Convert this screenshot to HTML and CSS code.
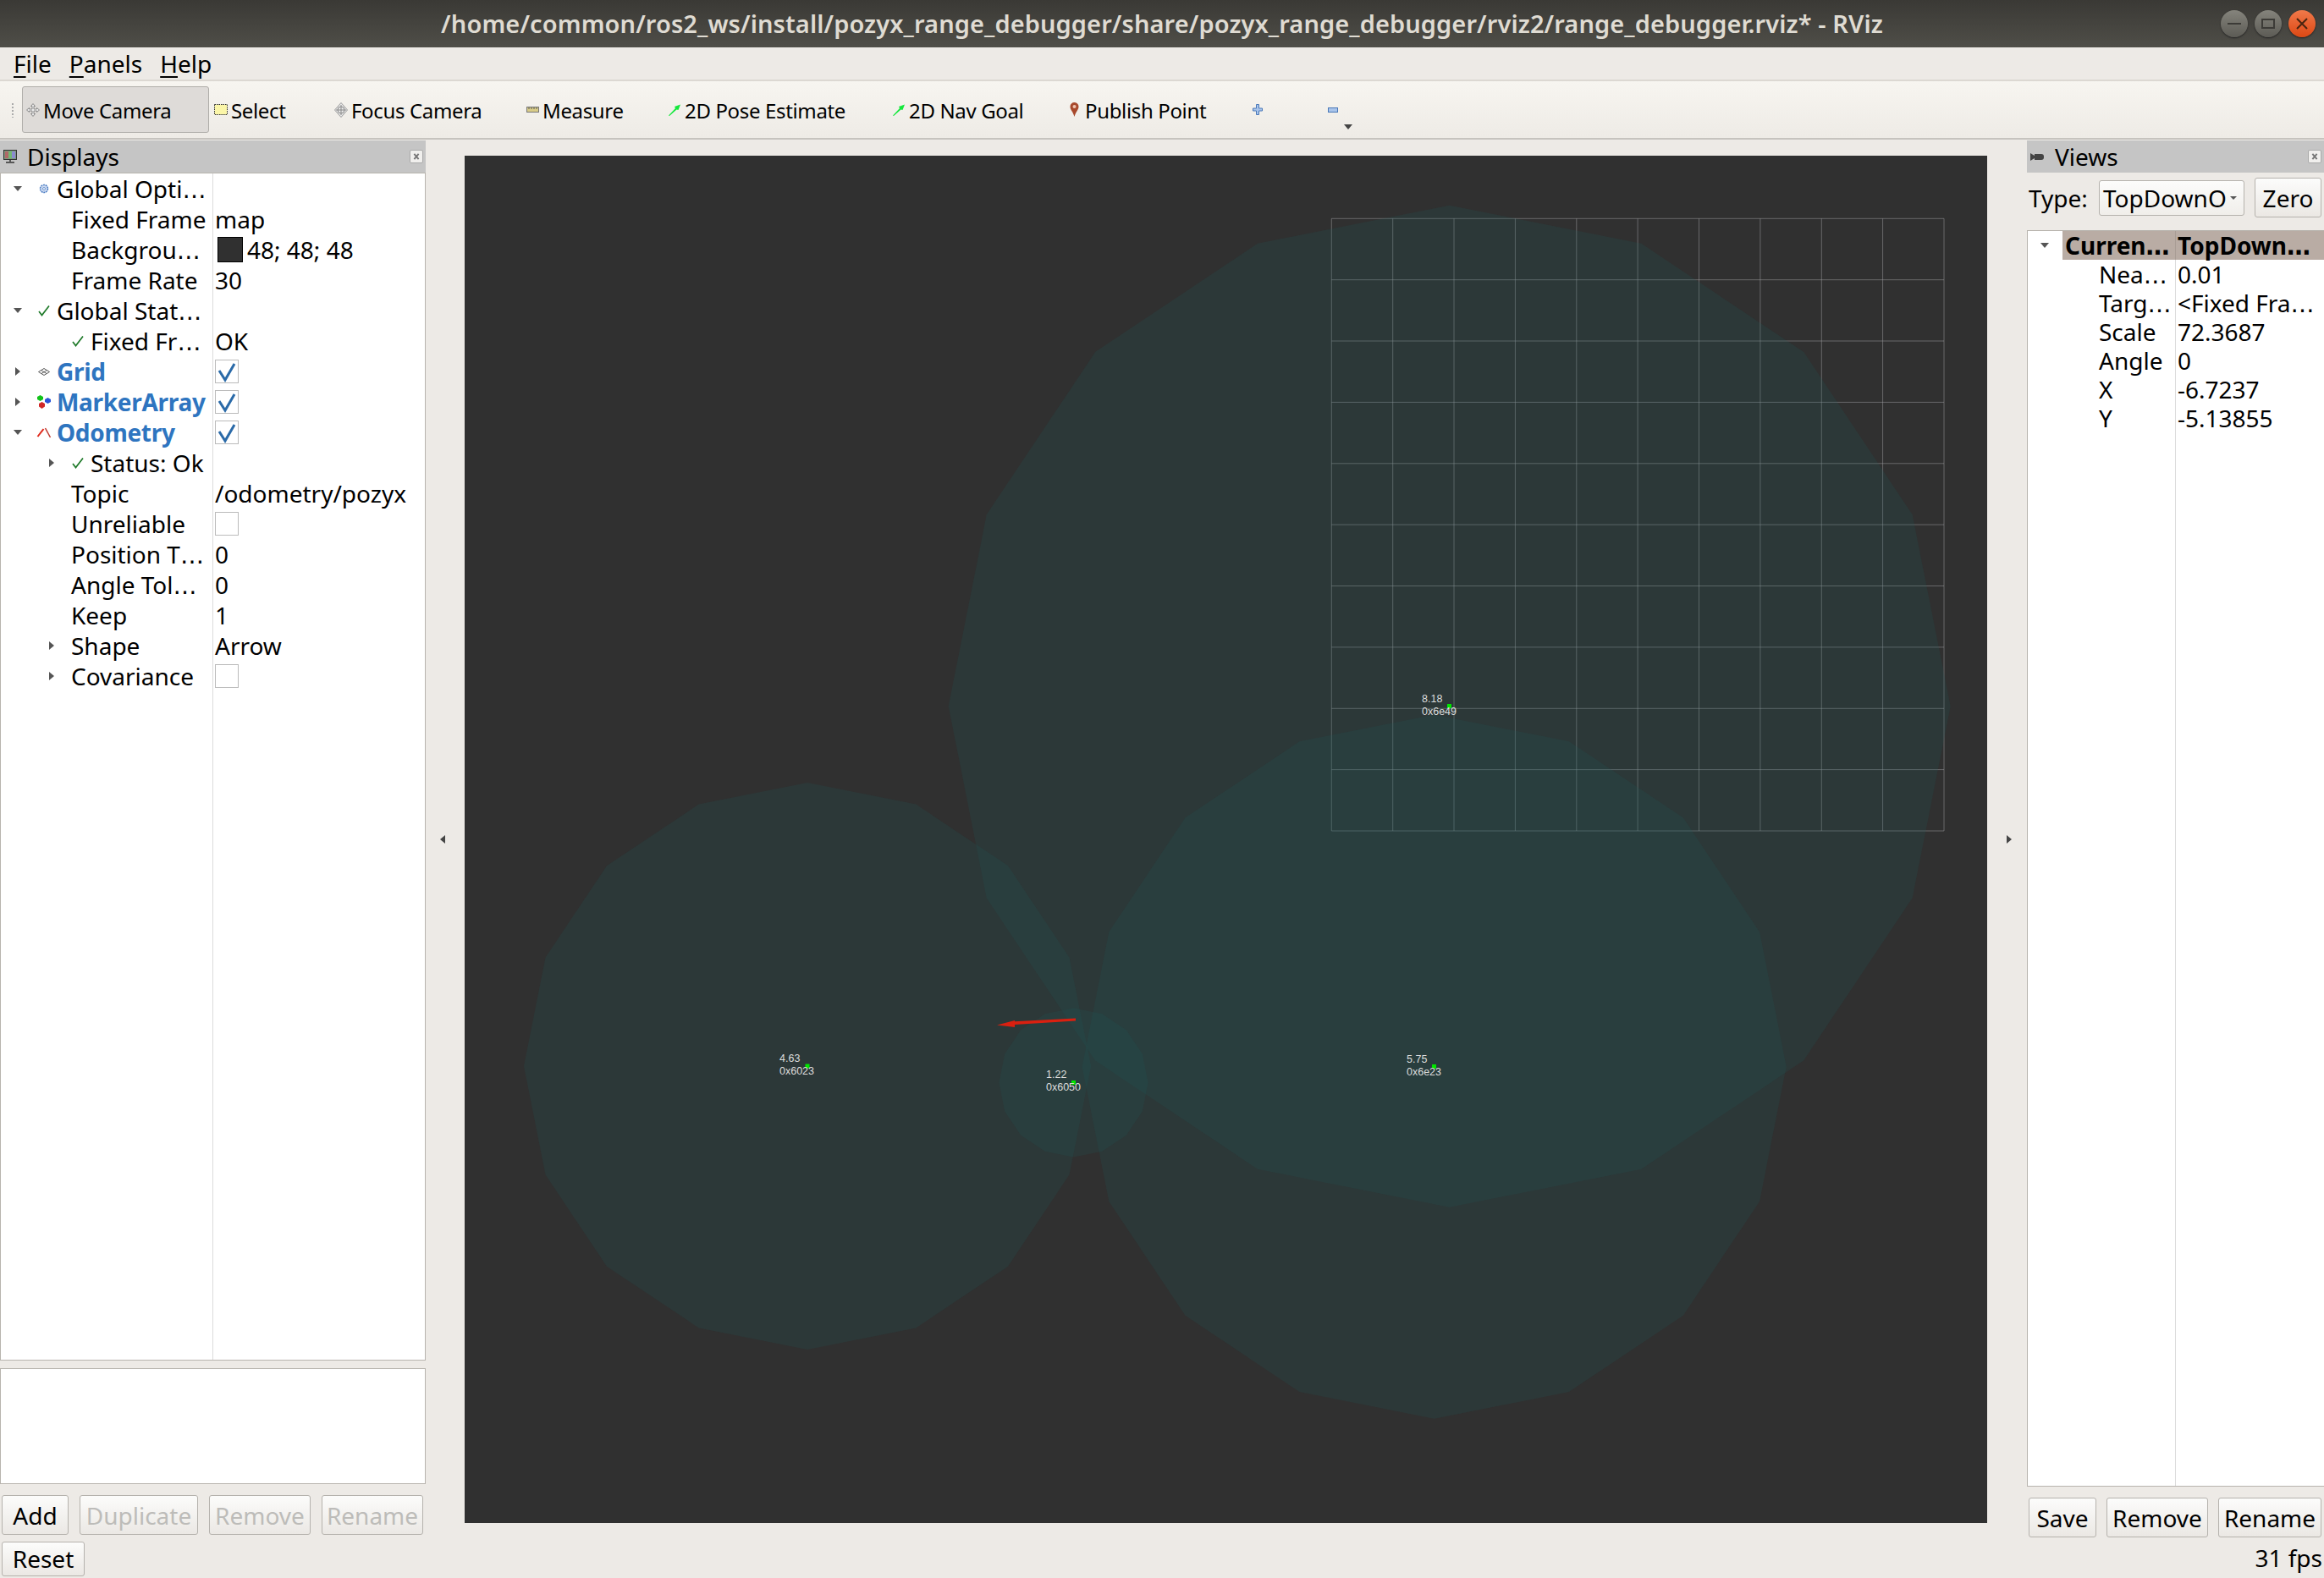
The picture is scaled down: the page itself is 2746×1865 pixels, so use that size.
FILE: index.html

```html
<!DOCTYPE html>
<html lang="en">
<head>
  <meta charset="UTF-8" />
  <title>RViz</title>
  <link rel="stylesheet" href="styles.css">
</head>
<body>

  <svg class="defs" width="0" height="0">
    <symbol id="ok" viewBox="0 0 14 14"><path d="M1 8l3.500 4.500L13 1.500" fill="none" stroke="#1f7a2a" stroke-width="1.700"/></symbol>
    <symbol id="tick" viewBox="0 0 28 28"><path d="M5 13l7 11L23 5" fill="none" stroke="#2a6aa8" stroke-width="3"/></symbol>
    <symbol id="close" viewBox="0 0 16 16"><path d="M5 4.500l6 7M11 4.500l-6 7" stroke="#777" stroke-width="2.200"/></symbol>
    <symbol id="goal" viewBox="0 0 16 14"><path d="M1 13.500L9 5l-1-2 7-2.500-2.500 6.500-2-.5L2 14z" fill="#14e83c"/></symbol>
    <polygon id="sphere" points="0,-1 .3827,-.9239 .7071,-.7071 .9239,-.3827 1,0 .9239,.3827 .7071,.7071 .3827,.9239 0,1 -.3827,.9239 -.7071,.7071 -.9239,.3827 -1,0 -.9239,-.3827 -.7071,-.7071 -.3827,-.9239"/>
  </svg>

  <header class="titlebar">
    <div></div>
    <div class="title">/home/common/ros2_ws/install/pozyx_range_debugger/share/pozyx_range_debugger/rviz2/range_debugger.rviz* - RViz</div>
    <div class="winbtns">
      <span class="winbtn"><svg width="18" height="18" viewBox="0 0 18 18"><path d="M1 9h16" stroke="#3c3b37" stroke-width="2"/></svg></span>
      <span class="winbtn"><svg width="18" height="18" viewBox="0 0 18 18"><rect x="2" y="4" width="14" height="10" fill="none" stroke="#3c3b37" stroke-width="2"/></svg></span>
      <span class="winbtn winclose"><svg width="18" height="18" viewBox="0 0 18 18"><path d="M3 3l12 12M15 3L3 15" stroke="#4a2410" stroke-width="2"/></svg></span>
    </div>
  </header>

  <nav class="menubar">
    <span><u>F</u>ile</span>
    <span><u>P</u>anels</span>
    <span><u>H</u>elp</span>
  </nav>

  <div class="toolbar">
    <div class="handle"></div>
    <div class="tools">
      <div class="tool active">
        <svg class="tico" width="16" height="16" viewBox="0 0 16 16"><path d="M8 .5l2.500 3H9V7h3.500V5.500l3 2.500-3 2.500V9H9v3.500h1.500L8 15.500l-2.500-3H7V9H3.500v1.500L.5 8l3-2.500V7H7V3.500H5.500z" fill="#ececec" stroke="#8a8a8a"/></svg>
        <span>Move Camera</span>
      </div>
      <div class="tool">
        <svg class="tico" width="16" height="13" viewBox="0 0 16 13"><rect x=".5" y=".5" width="15" height="12" fill="#fbf6a8" stroke="#333" stroke-dasharray="1.500 1"/></svg>
        <span>Select</span>
      </div>
      <div class="tool">
        <svg class="tico" width="16" height="18" viewBox="0 0 16 18"><path d="M8 .5L15.500 9 8 17.500.5 9z" fill="#e8e8e8" stroke="#999"/><circle cx="8" cy="9" r="4" fill="none" stroke="#888"/><path d="M8 3v12M2 9h12" stroke="#888"/></svg>
        <span>Focus Camera</span>
      </div>
      <div class="tool">
        <svg class="tico" width="15" height="7" viewBox="0 0 15 7"><rect x=".5" y=".5" width="14" height="6" fill="#d9cc88" stroke="#777"/><path d="M3 1v2M6 1v2M9 1v2M12 1v2" stroke="#555"/></svg>
        <span>Measure</span>
      </div>
      <div class="tool">
        <svg class="tico" width="16" height="14"><use href="#goal"/></svg>
        <span>2D Pose Estimate</span>
      </div>
      <div class="tool">
        <svg class="tico" width="16" height="14"><use href="#goal"/></svg>
        <span>2D Nav Goal</span>
      </div>
      <div class="tool">
        <svg class="tico pin" width="11" height="17" viewBox="0 0 11 17"><path d="M5.500 17C4 11 .5 9 .5 5a5 5 0 0 1 10 0c0 4-3.500 6-5 12z" fill="#a8492c"/><circle cx="5.500" cy="5" r="2" fill="#f0c4b0"/></svg>
        <span>Publish Point</span>
      </div>
      <div class="tool">
        <svg width="12" height="13" viewBox="0 0 12 13"><path d="M4.500.5h3v4.500H11.500v3H7.500v4.500h-3V8H.5V5h4z" fill="#a9c4ea" stroke="#4a78b8"/></svg>
      </div>
      <div class="tool">
        <svg width="12" height="6" viewBox="0 0 12 6"><rect x=".5" y=".5" width="11" height="5" fill="#a9c4ea" stroke="#4a78b8"/></svg>
        <span class="more"></span>
      </div>
    </div>
  </div>

  <main class="main">
    <section class="dock dock-left">
      <div class="dock-title">
        <svg class="dock-ico" width="16" height="16" viewBox="0 0 16 16"><rect x=".5" y=".5" width="15" height="11" fill="#7c9a7c" stroke="#333"/><rect x="2" y="2" width="4" height="8" fill="#b06868"/><rect x="6" y="2" width="4" height="8" fill="#72b872"/><rect x="10" y="2" width="4" height="8" fill="#8a8ad0"/><path d="M8 12v2M3 15h10" stroke="#333" stroke-width="1.500"/></svg>
        <span class="dock-name">Displays</span>
        <svg class="dock-close" width="16" height="16"><use href="#close"/></svg>
      </div>

      <div class="tree displays">
        <div class="row">
          <div class="name"><span class="tw open"></span>
            <svg class="ic" width="14" height="14" viewBox="0 0 14 14"><circle cx="7" cy="7" r="4.500" fill="#cfdcf2" stroke="#4f7fc4" stroke-width="1.500" stroke-dasharray="2 .8"/><circle cx="7" cy="7" r="1.500" fill="#fff" stroke="#4f7fc4" stroke-width=".8"/></svg>
            <span class="lbl">Global Opti<span class="el">…</span></span></div>
        </div>
        <div class="row"><div class="name prop">Fixed Frame</div><div class="val">map</div></div>
        <div class="row"><div class="name prop"><span>Backgrou<span class="el">…</span></span></div><div class="val"><span class="swatch"></span>48; 48; 48</div></div>
        <div class="row"><div class="name prop">Frame Rate</div><div class="val">30</div></div>
        <div class="row">
          <div class="name"><span class="tw open"></span><svg class="ic" width="14" height="14"><use href="#ok"/></svg><span class="lbl">Global Stat<span class="el">…</span></span></div>
        </div>
        <div class="row">
          <div class="name sub2"><svg class="ic" width="14" height="14"><use href="#ok"/></svg><span class="lbl">Fixed Fr<span class="el">…</span></span></div>
          <div class="val">OK</div>
        </div>
        <div class="row">
          <div class="name"><span class="tw"></span>
            <svg class="ic" width="14" height="9" viewBox="0 0 14 9"><path d="M7 .5L13.500 4.500 7 8.500.5 4.500zM3.500 2.500l6.500 4M10.500 2.500L4 6.500" fill="none" stroke="#555"/></svg>
            <span class="lbl display">Grid</span></div>
          <div class="val"><span class="check"><svg width="28" height="28"><use href="#tick"/></svg></span></div>
        </div>
        <div class="row">
          <div class="name"><span class="tw"></span>
            <svg class="ic" width="17" height="16" viewBox="0 0 17 16"><path d="M4 0l3.500 2v3L4 7 .5 5V2z" fill="#12c21a"/><path d="M13 3l3.500 2v3L13 10 9.500 8V5z" fill="#2a54d8"/><path d="M6 8l3.500 2v3.500L6 16l-3.500-2.500V10z" fill="#d02828"/></svg>
            <span class="lbl display">MarkerArray</span></div>
          <div class="val"><span class="check"><svg width="28" height="28"><use href="#tick"/></svg></span></div>
        </div>
        <div class="row">
          <div class="name"><span class="tw open"></span>
            <svg class="ic" width="17" height="13" viewBox="0 0 17 13"><path d="M1 11l7-9" stroke="#e02a1c" stroke-width="2" fill="none"/><path d="M10 1l6 11" stroke="#c03a30" stroke-width="1.500" fill="none"/></svg>
            <span class="lbl display">Odometry</span></div>
          <div class="val"><span class="check"><svg width="28" height="28"><use href="#tick"/></svg></span></div>
        </div>
        <div class="row">
          <div class="name sub"><span class="tw"></span><svg class="ic" width="14" height="14"><use href="#ok"/></svg><span class="lbl">Status: Ok</span></div>
        </div>
        <div class="row"><div class="name prop">Topic</div><div class="val">/odometry/pozyx</div></div>
        <div class="row"><div class="name prop">Unreliable</div><div class="val"><span class="check"></span></div></div>
        <div class="row"><div class="name prop"><span>Position T<span class="el">…</span></span></div><div class="val">0</div></div>
        <div class="row"><div class="name prop"><span>Angle Tol<span class="el">…</span></span></div><div class="val">0</div></div>
        <div class="row"><div class="name prop">Keep</div><div class="val">1</div></div>
        <div class="row"><div class="name sub"><span class="tw"></span><span class="lbl after-tw">Shape</span></div><div class="val">Arrow</div></div>
        <div class="row"><div class="name sub"><span class="tw"></span><span class="lbl after-tw">Covariance</span></div><div class="val"><span class="check"></span></div></div>
      </div>

      <div class="splitter"></div>
      <div class="help-box"></div>

      <div class="btn-row btn-row-l">
        <button class="btn b-add">Add</button>
        <button class="btn b-dup" disabled>Duplicate</button>
        <button class="btn b-rem" disabled>Remove</button>
        <button class="btn b-ren" disabled>Rename</button>
      </div>
    </section>

    <div class="center">
      <span class="side side-l"></span>
      <div class="viewport">
        <svg class="scene" viewBox="549 184 1799 1616" width="1799" height="1616">
          <path class="grid" d="M1573.300 258.300V982M1645.700 258.300V982M1718 258.300V982M1790.400 258.300V982M1862.800 258.300V982M1935.100 258.300V982M2007.500 258.300V982M2079.900 258.300V982M2152.300 258.300V982M2224.600 258.300V982M2297 258.300V982M1573.300 258.300H2297M1573.300 330.700H2297M1573.300 403H2297M1573.300 475.400H2297M1573.300 547.800H2297M1573.300 620.100H2297M1573.300 692.500H2297M1573.300 764.900H2297M1573.300 837.300H2297M1573.300 909.600H2297M1573.300 982H2297"/>
          <use class="sph" href="#sphere" transform="translate(1712.700 834.700) scale(592)"/>
          <use class="sph" href="#sphere" transform="translate(954 1260) scale(335)"/>
          <use class="sph" href="#sphere" transform="translate(1694.700 1260.700) scale(416)"/>
          <use class="sph" href="#sphere" transform="translate(1268.500 1279.500) scale(88)"/>

          <path class="arrow" d="M1271 1203.500L1199 1207.200V1206L1178 1211.500 1199 1214V1211L1271 1206.500z"/>

          <rect class="mark" x="1710" y="832" width="5" height="5"/>
          <rect class="mark" x="951.500" y="1257.500" width="5" height="5"/>
          <rect class="mark" x="1692" y="1258" width="5" height="5"/>
          <rect class="mark" x="1266" y="1277" width="5" height="5"/>

          <text class="tag" x="1680" y="830">8.18</text>
          <text class="tag" x="1680" y="845">0x6e49</text>
          <text class="tag" x="921" y="1255">4.63</text>
          <text class="tag" x="921" y="1270">0x6023</text>
          <text class="tag" x="1662" y="1256">5.75</text>
          <text class="tag" x="1662" y="1271">0x6e23</text>
          <text class="tag" x="1236" y="1274">1.22</text>
          <text class="tag" x="1236" y="1289">0x6050</text>
        </svg>
      </div>
      <span class="side side-r"></span>
    </div>

    <section class="dock dock-right">
      <div class="dock-title">
        <svg class="dock-ico" width="16" height="9" viewBox="0 0 16 9"><path d="M0 0l5 3V1h8a3 3 0 0 1 3 3v1a3 3 0 0 1-3 3H5V6L0 9z" fill="#444"/></svg>
        <span class="dock-name">Views</span>
        <svg class="dock-close" width="16" height="16"><use href="#close"/></svg>
      </div>

      <div class="type-row">
        <span class="type-lbl">Type:</span>
        <div class="combo"><span>TopDownO</span><i></i></div>
        <button class="btn b-zero">Zero</button>
      </div>

      <div class="tree views">
        <div class="row head">
          <div class="name"><span class="tw open"></span><span class="lbl">Curren<span class="el">…</span></span></div>
          <div class="val"><span>TopDown<span class="el">…</span></span></div>
        </div>
        <div class="row"><div class="name prop"><span>Nea<span class="el">…</span></span></div><div class="val">0.01</div></div>
        <div class="row"><div class="name prop"><span>Targ<span class="el">…</span></span></div><div class="val"><span>&lt;Fixed Fra<span class="el">…</span></span></div></div>
        <div class="row"><div class="name prop">Scale</div><div class="val">72.3687</div></div>
        <div class="row"><div class="name prop">Angle</div><div class="val">0</div></div>
        <div class="row"><div class="name prop">X</div><div class="val">-6.7237</div></div>
        <div class="row"><div class="name prop">Y</div><div class="val">-5.13855</div></div>
      </div>

      <div class="btn-row btn-row-r">
        <button class="btn b-save">Save</button>
        <button class="btn b-rem2">Remove</button>
        <button class="btn b-ren2">Rename</button>
      </div>
    </section>
  </main>

  <footer class="statusbar">
    <button class="btn b-reset">Reset</button>
    <span class="fps">31 fps</span>
  </footer>

</body>
</html>
```

FILE: styles.css

```css
* {
  box-sizing: border-box;
}
html, body {
  margin: 0;
  padding: 0;
}
body {
  width: 2746px;
  height: 1865px;
  display: flex;
  flex-direction: column;
  overflow: hidden;
  background: #edeae6;
  color: #000;
  font-family: "Noto Sans", sans-serif;
  font-size: 28px;
  line-height: 32px;
}
.defs {
  position: absolute;
}
.el {
  font-family: "DejaVu Sans", sans-serif;
  line-height: 1;
}

/* window chrome */
.titlebar {
  height: 56px;
  flex: none;
  display: grid;
  grid-template-columns: 1fr auto 1fr;
  align-items: center;
  background: linear-gradient(#3a3935, #4f4e48);
}
.title {
  color: #dfdbd2;
  font-size: 29px;
  font-weight: 600;
  letter-spacing: .1px;
  white-space: nowrap;
}
.winbtns {
  display: flex;
  justify-content: flex-end;
  gap: 8px;
  padding-right: 10px;
}
.winbtn {
  width: 32px;
  height: 32px;
  border-radius: 50%;
  display: flex;
  align-items: center;
  justify-content: center;
  background: linear-gradient(#85847c, #5c5b55);
  box-shadow: 0 1px 2px #222;
}
.winclose {
  background: linear-gradient(#f0794a, #dd4814);
}

.menubar {
  height: 38px;
  flex: none;
  display: flex;
  align-items: center;
  gap: 21px;
  padding-left: 16px;
  background: #edeae6;
}
.menubar u {
  text-underline-offset: 4px;
}

.toolbar {
  height: 71px;
  flex: none;
  display: flex;
  align-items: center;
  border-top: 2px solid #dcd8d2;
  border-bottom: 2px solid #c6c3be;
  background: linear-gradient(#f7f5f0, #eeebe6);
  font-size: 24px;
  letter-spacing: -.35px;
}
.handle {
  width: 4px;
  height: 18px;
  margin: 0 9px 0 13px;
  background: radial-gradient(circle, #aaa 1px, transparent 1px) 0 0 / 4px 4px;
}
.tools {
  display: grid;
  grid-template-columns: 221px 142px 227px 167px 265px 210px 216px 89px 60px;
}
.tool {
  height: 55px;
  display: flex;
  align-items: center;
  padding-left: 6px;
  white-space: nowrap;
  position: relative;
}
.tool span {
  margin-top: 2px;
}
.tool.active {
  background: #dedbd8;
  border: 1px solid #b0aeaa;
  border-radius: 3px;
  padding-left: 4px;
}
.tico {
  margin-right: 4px;
  flex: none;
}
.pin {
  margin-right: 7px;
}
.more {
  position: absolute;
  left: 25px;
  bottom: 4px;
  border: 5px solid transparent;
  border-top: 6px solid #444;
  border-bottom: 0;
}

/* main area */
.main {
  flex: 1;
  min-height: 0;
  margin-top: 1px;
  display: flex;
}
.dock {
  display: flex;
  flex-direction: column;
}
.dock-left {
  width: 503px;
  flex: none;
}
.dock-right {
  width: 351px;
  flex: none;
}
.dock-title {
  height: 38px;
  flex: none;
  display: flex;
  align-items: center;
  background: #c5c5c5;
}
.dock-ico {
  margin-left: 4px;
}
.dock-left .dock-name {
  margin-left: 12px;
}
.dock-right .dock-name {
  margin-left: 13px;
}
.dock-close {
  margin-left: auto;
  margin-right: 3px;
  background: #f0efed;
  border: 1px solid #aaa;
  border-radius: 2px;
}

/* property trees */
.tree {
  flex: 1;
  min-height: 0;
  overflow: hidden;
  background: linear-gradient(#dcdcdc, #dcdcdc) 250px 0 / 1px 100% no-repeat #fff;
  border: 1px solid #b8b4ae;
}
.row {
  height: 36px;
  display: flex;
  align-items: center;
}
.name {
  width: 251px;
  height: 100%;
  flex: none;
  display: flex;
  align-items: center;
  white-space: nowrap;
}
.prop {
  padding-left: 83px;
}
.sub {
  padding-left: 40px;
}
.sub2 {
  padding-left: 80px;
}
.tw {
  width: 40px;
  flex: none;
  display: flex;
  justify-content: center;
}
.tw::before {
  content: "";
  border: 5px solid transparent;
  border-left: 6px solid #555;
  border-right: 0;
}
.tw.open::before {
  border: 5px solid transparent;
  border-top: 6px solid #555;
  border-bottom: 0;
}
.ic {
  width: 22px;
  flex: none;
}
.lbl {
  margin-left: 4px;
}
.after-tw {
  margin-left: 3px;
}
.display {
  color: #2e75c0;
  font-weight: 700;
  letter-spacing: -.3px;
}
.val {
  padding-left: 2px;
  display: flex;
  align-items: center;
  white-space: nowrap;
}
.swatch {
  width: 30px;
  height: 30px;
  margin: 0 5px 0 3px;
  background: #303030;
  border: 1px solid #000;
}
.check {
  width: 28px;
  height: 28px;
  display: block;
  background: #fff;
  border: 1px solid #bbb;
}
.check svg {
  display: block;
  margin: -1px;
}

.splitter {
  height: 9px;
  flex: none;
}
.help-box {
  height: 137px;
  flex: none;
  background: #fff;
  border: 1px solid #b8b4ae;
}

.btn {
  height: 47px;
  padding: 0;
  font: inherit;
  color: #000;
  background: linear-gradient(#fcfcfb, #ebe8e4);
  border: 1px solid #b5b2ad;
  border-radius: 3px;
}
.btn:disabled {
  color: #bdbcb9;
}
.btn-row {
  flex: none;
  display: flex;
  align-items: flex-end;
  padding-left: 2px;
}
.btn-row-l {
  height: 63px;
  padding-bottom: 3px;
  gap: 13px;
}
.b-add { width: 79px; }
.b-dup { width: 140px; }
.b-rem { width: 120px; }
.b-ren { width: 120px; }

/* 3d view */
.center {
  width: 1892px;
  flex: none;
  display: grid;
  grid-template-columns: 46px 1799px 47px;
  align-items: center;
  padding-top: 18px;
  padding-bottom: 17px;
}
.side {
  justify-self: center;
  border: 5px solid transparent;
}
.side-l {
  border-right: 6px solid #444;
  border-left: 0;
  margin-right: 7px;
}
.side-r {
  border-left: 6px solid #444;
  border-right: 0;
  margin-left: 4px;
}
.viewport {
  height: 1616px;
  background: #303030;
}
.scene {
  display: block;
}
.grid {
  fill: none;
  stroke: rgba(160,160,164,.5);
  stroke-width: 1;
}
.sph {
  fill: rgba(28,88,88,.2);
}
.arrow {
  fill: #d92010;
}
.mark {
  fill: #00e600;
}
.tag {
  fill: #dedede;
  font-family: "Liberation Sans", sans-serif;
  font-size: 12.500px;
}

/* views panel */
.type-row {
  height: 68px;
  flex: none;
  display: flex;
  align-items: center;
  padding: 0 0 9px 2px;
}
.type-lbl {
  width: 83px;
}
.combo {
  width: 172px;
  height: 42px;
  display: flex;
  align-items: center;
  justify-content: space-between;
  padding: 0 8px 0 4px;
  background: linear-gradient(#fcfcfb, #f0eeea);
  border: 1px solid #b5b2ad;
  border-radius: 3px;
  white-space: nowrap;
}
.combo i {
  flex: none;
  border: 4px solid transparent;
  border-top: 4px solid #555;
  border-bottom: 0;
}
.b-zero {
  width: 79px;
  margin-left: 12px;
}
.views {
  background: linear-gradient(#dcdcdc, #dcdcdc) 174px 0 / 1px 100% no-repeat #fff;
  border-right: 0;
}
.views .row {
  height: 34px;
}
.views .name {
  width: 175px;
}
.views .prop {
  padding-left: 84px;
}
.views .head {
  font-weight: 700;
  background: linear-gradient(#b9aca4, #b9aca4) 41px 0 / 100% 100% no-repeat;
}
.head .name {
  box-shadow: inset -1px 0 0 #a89c94;
}
.btn-row-r {
  height: 60px;
  gap: 12px;
}
.b-save { width: 80px; }
.b-rem2 { width: 120px; }
.b-ren2 { width: 122px; }

.statusbar {
  height: 48px;
  flex: none;
  display: flex;
  align-items: center;
  justify-content: space-between;
  padding: 0 2px;
}
.b-reset {
  width: 98px;
  height: 41px;
  margin-top: 2px;
}
```
